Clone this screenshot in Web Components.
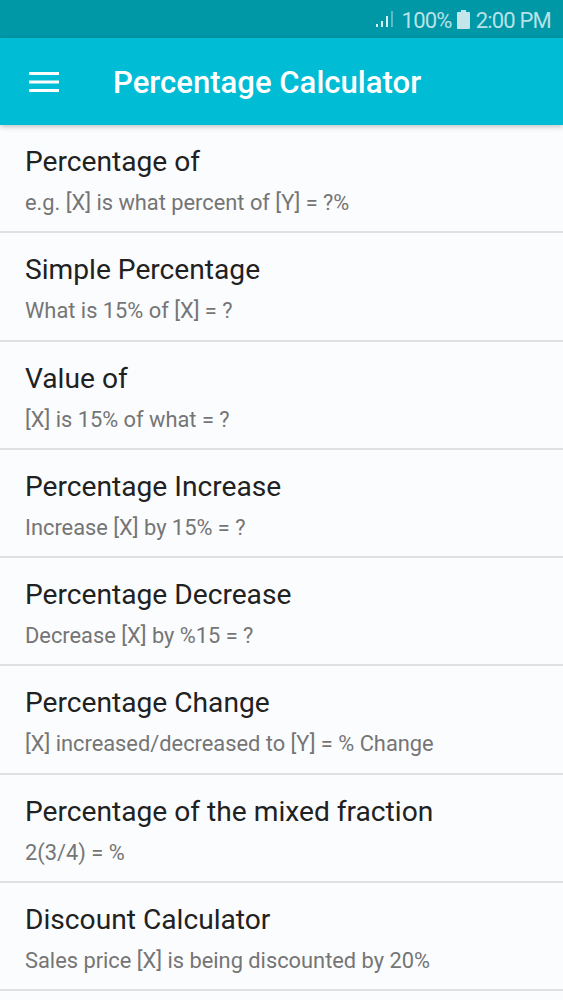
<!DOCTYPE html>
<html>
<head>
<meta charset="utf-8">
<style>
html, body { margin: 0; padding: 0; height: 100%; background: #fbfcfe; overflow: hidden; }
body { font-family: Roboto, "Noto Sans", sans-serif; }
</style>
</head>
<body>
<calc-app>
    <status-bar slot="status" time="2:00 PM" level="100%"></status-bar>
    <app-bar slot="bar">Percentage Calculator</app-bar>
    <calc-row heading="Percentage of">e.g. [X] is what percent of [Y] = ?%</calc-row>
    <calc-row heading="Simple Percentage">What is 15% of [X] = ?</calc-row>
    <calc-row heading="Value of">[X] is 15% of what = ?</calc-row>
    <calc-row heading="Percentage Increase">Increase [X] by 15% = ?</calc-row>
    <calc-row heading="Percentage Decrease">Decrease [X] by %15 = ?</calc-row>
    <calc-row heading="Percentage Change">[X] increased/decreased to [Y] = % Change</calc-row>
    <calc-row heading="Percentage of the mixed fraction">2(3/4) = %</calc-row>
    <calc-row heading="Discount Calculator">Sales price [X] is being discounted by 20%</calc-row>
</calc-app>

<script>
// Page frame
class CalcApp extends HTMLElement {
    constructor() {
        super();
        this.attachShadow({ mode: 'open' });
        this.shadowRoot.innerHTML = `
            <style>
                :host {
                    display: flex;
                    flex-direction: column;
                    height: 1000px;
                    overflow: hidden;
                    background: #fbfcfe;
                }
                .list {
                    display: flex;
                    flex-direction: column;
                }
            </style>
            <slot name="status"></slot>
            <slot name="bar"></slot>
            <div class="list"><slot></slot></div>
        `;
    }
}

// Android status bar
class StatusBar extends HTMLElement {
    constructor() {
        super();
        this.attachShadow({ mode: 'open' });
    }

    connectedCallback() {
        this.shadowRoot.innerHTML = `
            <style>
                :host {
                    display: flex;
                    align-items: center;
                    justify-content: flex-end;
                    height: 38px;
                    box-sizing: border-box;
                    padding: 0 12px 0 0;
                    background: #0097a7;
                    color: #b9e2e7;
                    font-size: 22px;
                    letter-spacing: -0.8px;
                }
                span { margin-top: 2px; }
                svg { display: block; }
                .signal { margin-right: 7px; }
                .battery { margin: 0 6px 0 5px; }
            </style>
            <svg class="signal" width="20" height="18" viewBox="0 0 20 18">
                <rect x="1" y="14" width="2" height="3" fill="#d4eef1"/>
                <rect x="6" y="11" width="2" height="6" fill="#d4eef1"/>
                <rect x="11" y="6" width="2" height="11" fill="#d4eef1"/>
                <rect x="16" y="1" width="2" height="16" fill="#5fb9c4"/>
            </svg>
            <span>${this.getAttribute('level')}</span>
            <svg class="battery" width="13" height="19" viewBox="0 0 13 19">
                <path d="M4 0h5v2h3a1 1 0 0 1 1 1v15a1 1 0 0 1-1 1H1a1 1 0 0 1-1-1V3a1 1 0 0 1 1-1h3z" fill="#c4e5e9"/>
            </svg>
            <span>${this.getAttribute('time')}</span>
        `;
    }
}

// Toolbar with hamburger and title
class AppBar extends HTMLElement {
    constructor() {
        super();
        this.attachShadow({ mode: 'open' });
        this.shadowRoot.innerHTML = `
            <style>
                :host {
                    display: flex;
                    align-items: center;
                    height: 87px;
                    flex: none;
                    position: relative;
                    z-index: 1;
                    background: #00bcd4;
                    color: #fff;
                    box-shadow: 0 2px 5px rgba(0, 0, 0, 0.22);
                }
                svg { display: block; margin-left: 29px; }
                .title {
                    margin: 2px 0 0 54px;
                    font-size: 31.1px;
                    font-weight: 500;
                    line-height: 1;
                }
            </style>
            <svg width="30" height="22" viewBox="0 0 30 22">
                <rect x="0" y="1" width="30" height="3" fill="#fff"/>
                <rect x="0" y="9.500" width="30" height="3" fill="#fff"/>
                <rect x="0" y="18" width="30" height="3" fill="#fff"/>
            </svg>
            <div class="title"><slot></slot></div>
        `;
    }
}

// One calculator entry in the list
class CalcRow extends HTMLElement {
    constructor() {
        super();
        this.attachShadow({ mode: 'open' });
    }

    connectedCallback() {
        this.shadowRoot.innerHTML = `
            <style>
                :host {
                    display: flex;
                    flex-direction: column;
                    height: 108.25px;
                    flex: none;
                    box-sizing: border-box;
                    padding: 20px 0 0 25px;
                    border-bottom: 2px solid #dfe0e1;
                }
                .heading {
                    font-size: 28.17px;
                    line-height: 34px;
                    color: #212121;
                }
                .sub {
                    margin-top: 9px;
                    font-size: 21.84px;
                    line-height: 30px;
                    color: #757575;
                }
            </style>
            <div class="heading">${this.getAttribute('heading')}</div>
            <div class="sub"><slot></slot></div>
        `;
    }
}

customElements.define('calc-app', CalcApp);
customElements.define('status-bar', StatusBar);
customElements.define('app-bar', AppBar);
customElements.define('calc-row', CalcRow);
</script>
</body>
</html>
